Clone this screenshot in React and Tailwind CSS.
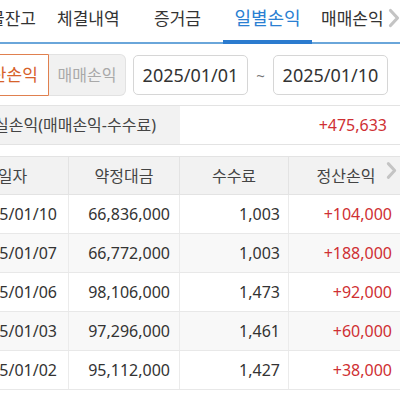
import React from "react";

const rows = [
  ["2025/01/10", "66,836,000", "1,003", "+104,000"],
  ["2025/01/07", "66,772,000", "1,003", "+188,000"],
  ["2025/01/06", "98,106,000", "1,473", "+92,000"],
  ["2025/01/03", "97,296,000", "1,461", "+60,000"],
  ["2025/01/02", "95,112,000", "1,427", "+38,000"],
];

function Chevron({ className }) {
  return (
    <svg className={className} viewBox="0 0 12 20" fill="none">
      <path d="M2.5 2.5 L9.5 10 L2.5 17.5" stroke="#c4c4c4" strokeWidth="3.2" strokeLinecap="round" strokeLinejoin="round" />
    </svg>
  );
}

export default function App() {
  return (
    <div
      className="relative w-[400px] h-[400px] overflow-hidden bg-white text-[#333]"
      style={{ fontFamily: '"Noto Sans", "Noto Sans CJK KR", sans-serif' }}
    >
      <div className="w-[446px] -ml-[43px]">
        {/* Tabs */}
        <div className="relative h-[44px] border-b-2 border-[#6aa6da] flex items-stretch text-[17px] leading-none">
          <div className="w-[80px] flex items-center justify-end pr-[1px] pb-[6px]">선물잔고</div>
          <div className="ml-[20px] w-[68px] flex items-center pb-[6px]">체결내역</div>
          <div className="ml-[29px] w-[51px] flex items-center pb-[6px]">증거금</div>
          <div className="relative ml-[18px] w-[89px] flex items-center justify-center pb-[6px] text-[#2a7fd2] text-[18px]">
            일별손익
            <div className="absolute left-0 right-0 -bottom-[2px] h-[4px] bg-[#2b7bcf]" />
          </div>
          <div className="ml-[9px] w-[68px] flex items-center pb-[6px]">매매손익</div>
        </div>

        {/* Controls */}
        <div className="mt-[10px] h-[42px] flex items-center">
          <div className="ml-[7px] flex h-[42px]">
            <div className="w-[85px] h-full border border-[#e0804f] rounded-l-[6px] flex items-center justify-center text-[17px] text-[#d6622a]">
              정산손익
            </div>
            <div className="w-[77px] h-full border border-l-0 border-[#e2e2e2] bg-[#f1f1f1] rounded-r-[6px] flex items-center justify-center text-[16px] text-[#a9a9a9]">
              매매손익
            </div>
          </div>
          <div className="ml-[7px] w-[115px] h-[40px] border border-[#d6d6d6] rounded-[5px] flex items-center justify-center text-[18px] text-[#333]">
            2025/01/01
          </div>
          <div className="w-[25px] text-center text-[15px] text-[#777]">~</div>
          <div className="w-[115px] h-[40px] border border-[#d6d6d6] rounded-[5px] flex items-center justify-center text-[18px] text-[#333]">
            2025/01/10
          </div>
        </div>

        {/* Summary */}
        <div className="mt-[9px] h-[40px] border-y border-[#e3e3e3] flex">
          <div className="w-[223px] bg-[#f2f2f2] flex items-center pl-[37px] text-[16px] text-[#444] whitespace-nowrap">
            실손익(매매손익-수수료)
          </div>
          <div className="flex-1 flex items-center justify-end pr-[16px] text-[16px] text-[#cf2f33]">
            +475,633
          </div>
        </div>

        {/* Table */}
        <div className="mt-[11px] border-t border-[#e3e3e3]">
          <div className="grid grid-cols-[112px_111px_109px_114px] h-[38px] bg-[#f2f2f2] border-b border-[#e3e3e3] text-[16px] text-[#444]">
            <div className="flex items-center justify-center border-r border-[#e3e3e3]">일자</div>
            <div className="flex items-center justify-center border-r border-[#e3e3e3]">약정대금</div>
            <div className="flex items-center justify-center border-r border-[#e3e3e3]">수수료</div>
            <div className="flex items-center justify-center">정산손익</div>
          </div>
          {rows.map((r, i) => (
            <div
              key={i}
              className={
                "grid grid-cols-[112px_111px_109px_114px] h-[39px] border-b border-[#e8e8e8] text-[16px] " +
                (i % 2 === 1 ? "bg-[#f8f8f8]" : "bg-white")
              }
            >
              <div className="flex items-center justify-end pr-[11px] border-r border-[#ebebeb] text-[#333]">{r[0]}</div>
              <div className="flex items-center justify-end pr-[9px] border-r border-[#ebebeb] text-[#333]">{r[1]}</div>
              <div className="flex items-center justify-end pr-[8px] border-r border-[#ebebeb] text-[#333]">{r[2]}</div>
              <div className="flex items-center justify-end pr-[11px] text-[#cf2f33]">{r[3]}</div>
            </div>
          ))}
        </div>
      </div>

      <Chevron className="absolute left-[388px] top-[8px] w-[12px] h-[20px]" />
      <Chevron className="absolute left-[386px] top-[161px] w-[11px] h-[19px]" />
    </div>
  );
}
